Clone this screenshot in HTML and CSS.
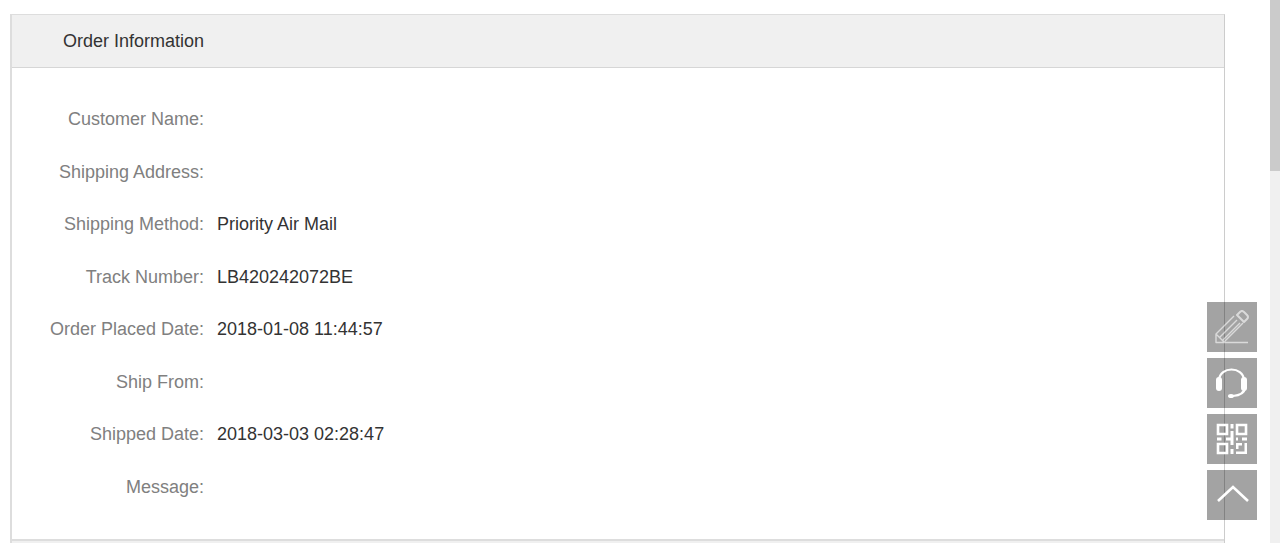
FILE: index.html
```
<!DOCTYPE html>
<html lang="en">

<head>
    <meta charset="UTF-8">
    <meta name="viewport" content="width=device-width, initial-scale=1.0">
    <title>Order Information</title>
    <link rel="stylesheet" href="styles.css">
</head>

<body>
    <main class="page">
        <section class="panel">
            <h2 class="panel-title">Order Information</h2>
            <dl class="info">
                <dt>Customer Name:</dt>
                <dd></dd>
                <dt>Shipping Address:</dt>
                <dd></dd>
                <dt>Shipping Method:</dt>
                <dd>Priority Air Mail</dd>
                <dt>Track Number:</dt>
                <dd>LB420242072BE</dd>
                <dt>Order Placed Date:</dt>
                <dd>2018-01-08 11:44:57</dd>
                <dt>Ship From:</dt>
                <dd></dd>
                <dt>Shipped Date:</dt>
                <dd>2018-03-03 02:28:47</dd>
                <dt>Message:</dt>
                <dd></dd>
            </dl>
            <div class="panel-next"></div>
        </section>
    </main>

    <!-- floating tools -->
    <div class="tools">
        <button type="button" class="tool" aria-label="Feedback">
            <svg class="pencil" viewBox="0 0 50 50">
                <path d="M41 40.500H9V32L27 14M9 32L17 40L36 21M13 35L30 18M16 38L33 21" stroke-width="1.4" />
                <path d="M30 13L33 10Q35 8 37 10L40 13Q42 15 40 17L37 20Z" stroke-width="2" />
            </svg>
        </button>
        <button type="button" class="tool" aria-label="Customer service">
            <svg viewBox="0 0 50 50">
                <path d="M12 22C13 8 36 8 37 22M38 30Q37 37 26 38" stroke-width="2.2" />
                <rect class="fill" x="9" y="19" width="6" height="14" rx="3" />
                <rect class="fill" x="34" y="19" width="6" height="14" rx="3" />
                <ellipse class="fill" cx="24" cy="38" rx="3" ry="2" />
            </svg>
        </button>
        <button type="button" class="tool" aria-label="QR code">
            <svg viewBox="0 0 50 50">
                <path d="M11 11h9v9h-9zM30 11h9v9h-9zM11 30h9v9h-9z" stroke-width="2.6" />
                <path class="fill" d="M23.500 10h3v4.500h-3zM23.500 17h3v14h-3zM19 23.500h5v3h-5zM10 23.500h4.500v3h-4.500zM29 23.500h2v3h-2zM35 23.500h5v3h-5zM23.500 35h3v5h-3zM29 29h6v2.500h-3.500v3.500h-2.500zM29 37.500h8.500v-8.500h2.500v11h-11z" />
            </svg>
        </button>
        <button type="button" class="tool" aria-label="Back to top">
            <svg viewBox="0 0 50 50">
                <path d="M11 31L26 17L41 31" stroke-width="2.6" />
            </svg>
        </button>
    </div>

    <div class="scrollbar">
        <div class="scrollbar-thumb"></div>
    </div>
</body>

</html>
```
FILE: styles.css
```
* {
    margin: 0;
    padding: 0;
    box-sizing: border-box;
}

body {
    font-family: Arial, "Liberation Sans", sans-serif;
    font-size: 18px;
    line-height: 24px;
    color: #333;
    background: #fff;
}

.page {
    height: 100vh;
    overflow: hidden;
    padding: 14px 55px 0 10px;
}

.panel {
    border: 1px solid #ddd;
    border-left-width: 2px;
    border-right-color: #ccc;
}

.panel-title {
    padding: 14px 51px;
    border-bottom: 1px solid #d6d6d6;
    background: #f0f0f0;
    font-size: 18px;
    font-weight: normal;
}

.info {
    display: grid;
    grid-template-columns: 154px 1fr;
    grid-auto-rows: 1fr;
    column-gap: 13px;
    align-items: center;
    min-height: 471px;
    padding: 25px 38px 26px;
}

.info dt {
    color: #808080;
    text-align: right;
    white-space: nowrap;
}

.panel-next {
    height: 54px;
    border-top: 2px solid #ddd;
    background: #f0f0f0;
}

.tools {
    position: fixed;
    right: 23px;
    bottom: 23px;
    display: flex;
    flex-direction: column;
    gap: 6px;
}

.tool {
    width: 50px;
    height: 50px;
    border: 0;
    background: rgba(0, 0, 0, 0.36);
    cursor: pointer;
}

.tool svg {
    display: block;
    width: 50px;
    height: 50px;
    fill: none;
    stroke: #fff;
}

.tool .fill {
    fill: #fff;
    stroke: none;
}

.tool .pencil {
    stroke-linejoin: round;
    opacity: 0.6;
}

.scrollbar {
    position: fixed;
    top: 0;
    right: 0;
    bottom: 0;
    width: 10px;
    background: #f0f0f0;
}

.scrollbar-thumb {
    height: 171px;
    background: #cbcbcb;
}
```
